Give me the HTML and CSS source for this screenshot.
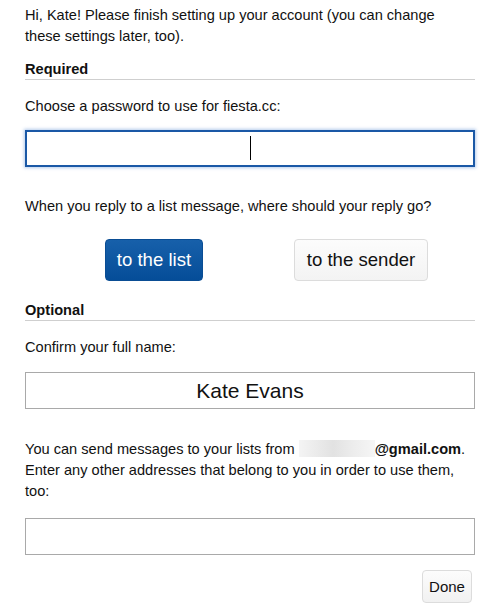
FILE: index.html
```html
<!DOCTYPE html>
<html>
<head>
<meta charset="utf-8">
<link rel="stylesheet" href="styles.css">
</head>
<body>
<div class="page">
  <p class="intro">Hi, Kate! Please finish setting up your account (you can change these settings later, too).</p>

  <h2 class="section">Required</h2>
  <p class="label">Choose a password to use for fiesta.cc:</p>
  <div class="field field-focus"><span class="caret"></span></div>

  <p class="label label-reply">When you reply to a list message, where should your reply go?</p>
  <div class="choices">
    <button class="btn btn-primary">to the list</button>
    <button class="btn btn-default">to the sender</button>
  </div>

  <h2 class="section section-optional">Optional</h2>
  <p class="label">Confirm your full name:</p>
  <div class="field field-name">Kate Evans</div>

  <p class="label label-email">You can send messages to your lists from <span class="blur"></span><b>@gmail.com</b>. Enter any other addresses that belong to you in order to use them, too:</p>
  <div class="field field-extra"></div>

  <div class="actions">
    <button class="btn-done">Done</button>
  </div>
</div>
</body>
</html>
```
FILE: styles.css
```css
html, body {
  margin: 0;
  padding: 0;
  background: #ffffff;
}
body {
  font-family: "Liberation Sans", Arial, sans-serif;
  font-size: 14.6px;
  color: #111;
}
.page {
  width: 450px;
  padding: 5px 0 0 25px;
}
.intro {
  margin: 0;
  width: 440px;
  line-height: 21px;
}
.section {
  margin: 12px 0 0 0;
  font-size: 14.6px;
  font-weight: bold;
  line-height: 20px;
  border-bottom: 1px solid #cfcfcf;
}
.label {
  margin: 16px 0 0 0;
  line-height: 21px;
}
.field {
  box-sizing: border-box;
  width: 450px;
  height: 37px;
  margin-top: 13px;
  border: 1px solid #a9a9a9;
  background: #fff;
}
.field-focus {
  border: 2px solid #1a58a6;
  box-shadow: 0 0 3px 1px rgba(90, 140, 210, 0.45);
  position: relative;
}
.caret {
  position: absolute;
  left: 223px;
  top: 4px;
  width: 1px;
  height: 24px;
  background: #000;
}
.label-reply {
  margin-top: 29px;
}
.choices {
  display: flex;
  gap: 91px;
  padding-left: 80px;
  margin-top: 22px;
}
.btn {
  box-sizing: border-box;
  height: 42px;
  padding: 0;
  white-space: nowrap;
  text-align: center;
  font-family: "Liberation Sans", Arial, sans-serif;
  font-size: 18.6px;
  border-radius: 4px;
  cursor: pointer;
}
.btn-primary {
  width: 98px;
  color: #fff;
  border: 1px solid #0a4d94;
  background: linear-gradient(#1760aa, #054d98);
}
.btn-default {
  width: 134px;
  color: #111;
  border: 1px solid #dcdcdc;
  background: linear-gradient(#fcfcfc, #f3f3f3);
}
.section-optional {
  margin-top: 19px;
}
.field-name {
  height: 37px;
  margin-top: 14px;
  text-align: center;
  font-size: 21px;
  line-height: 35px;
  color: #111;
}
.label-email {
  margin-top: 30px;
}
.blur {
  display: inline-block;
  width: 76px;
  height: 17px;
  vertical-align: -3px;
  background: linear-gradient(90deg, #f4f4f4, #e2e2e2 45%, #ececec 70%, #f6f6f6);
}
.label-email b {
  font-weight: bold;
}
.field-extra {
  margin-top: 16px;
  height: 37px;
}
.actions {
  display: flex;
  justify-content: flex-end;
  margin-top: 15px;
  padding-right: 3px;
}
.btn-done {
  box-sizing: border-box;
  width: 50px;
  height: 33px;
  padding: 0;
  font-family: "Liberation Sans", Arial, sans-serif;
  font-size: 15px;
  color: #111;
  border: 1px solid #dcdcdc;
  border-radius: 4px;
  background: linear-gradient(#fcfcfc, #f1f1f1);
}
```
